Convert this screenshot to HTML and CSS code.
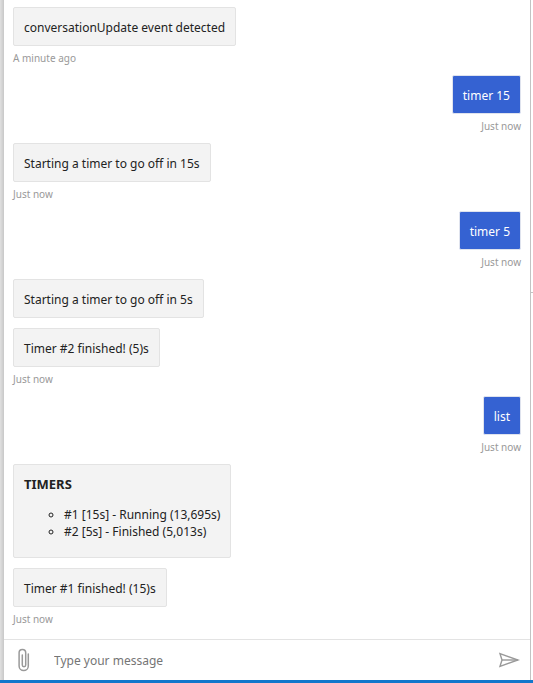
FILE: index.html
```html
<!DOCTYPE html>
<html lang="en">
<head>
<meta charset="utf-8">
<meta name="viewport" content="width=device-width, initial-scale=1">
<title>Chat</title>
<link rel="stylesheet" href="styles.css">
</head>
<body>
<div class="window">
  <div class="splitter"></div>
  <main class="chat">
    <div class="messages">
      <div class="group">
        <div class="bubble">conversationUpdate event detected</div>
        <div class="time">A minute ago</div>
      </div>
      <div class="group me">
        <div class="bubble">timer 15</div>
        <div class="time">Just now</div>
      </div>
      <div class="group">
        <div class="bubble">Starting a timer to go off in 15s</div>
        <div class="time">Just now</div>
      </div>
      <div class="group me">
        <div class="bubble">timer 5</div>
        <div class="time">Just now</div>
      </div>
      <div class="group">
        <div class="bubble">Starting a timer to go off in 5s</div>
        <div class="bubble">Timer #2 finished! (5)s</div>
        <div class="time">Just now</div>
      </div>
      <div class="group me">
        <div class="bubble">list</div>
        <div class="time">Just now</div>
      </div>
      <div class="group">
        <div class="bubble">
          <strong class="title">TIMERS</strong>
          <ul class="timers">
            <li>#1 [15s] - Running (13,695s)</li>
            <li>#2 [5s] - Finished (5,013s)</li>
          </ul>
        </div>
        <div class="bubble">Timer #1 finished! (15)s</div>
        <div class="time">Just now</div>
      </div>
    </div>
    <form class="composer">
      <button class="icon-button" type="button" aria-label="Attach a file">
        <svg width="12" height="24" viewBox="0 0 12 24" fill="none" stroke="#999" stroke-width="1.5" stroke-linecap="round">
          <path d="M10.300 6V18a4.600 4.600 0 0 1-9.200 0V4.800a3.300 3.300 0 0 1 6.600 0V17a1.700 1.700 0 0 1-3.400 0V7"/>
        </svg>
      </button>
      <input class="entry" type="text" placeholder="Type your message" aria-label="Type your message">
      <button class="icon-button" type="button" aria-label="Send">
        <svg width="22" height="16" viewBox="0 0 22 16" fill="none" stroke="#999" stroke-width="1.400" stroke-linejoin="miter">
          <path d="M2 1.700 20 8 2 14.300 4 8Z"/>
          <path d="M4 8H20"/>
        </svg>
      </button>
    </form>
  </main>
  <div class="edge"></div>
</div>
<footer class="status"></footer>
</body>
</html>
```
FILE: styles.css
```css
* {
  box-sizing: border-box;
}

body {
  margin: 0;
  min-height: 100vh;
  display: flex;
  flex-direction: column;
  background: #fff;
  color: #222;
  font-family: "Noto Sans", "Segoe UI", sans-serif;
  font-size: 12px;
  line-height: 17px;
}

.window {
  flex: 1;
  display: flex;
}

.splitter {
  width: 4px;
  background: linear-gradient(to right, #e0e0e0, #c8c8c8);
}

.chat {
  flex: 1;
  min-width: 0;
  display: flex;
  flex-direction: column;
}

.messages {
  flex: 1;
  display: flex;
  flex-direction: column;
  gap: 10px;
  padding: 7px 9px 3px;
}

.group {
  display: flex;
  flex-direction: column;
  align-items: flex-start;
}

.group.me {
  align-items: flex-end;
}

.bubble {
  padding: 11px 10px 9px;
  border: 1px solid #e3e3e3;
  border-radius: 2px;
  background: #f3f3f3;
}

.bubble + .bubble {
  margin-top: 10px;
}

.me .bubble {
  border-color: #dfe3ee;
  background: #3562d2;
  color: #fff;
}

.time {
  padding-top: 6px;
  color: #999;
  font-size: 10px;
  line-height: 13px;
}

.title {
  display: block;
  font-size: 13px;
}

.timers {
  margin: 13px 0 8px;
  padding-left: 40px;
  list-style: circle;
}

.composer {
  display: flex;
  align-items: center;
  height: 41px;
  border-top: 1px solid #e3e3e3;
  padding: 0 9px 0 0;
}

.icon-button {
  display: flex;
  justify-content: center;
  min-width: 40px;
  padding: 0;
  border: 0;
  background: none;
}

.icon-button:last-child {
  min-width: 24px;
}

.entry {
  flex: 1;
  min-width: 0;
  padding: 1px 10px 0;
  border: 0;
  outline: 0;
  background: none;
  font: inherit;
}

.entry::placeholder {
  color: #757575;
}

.edge {
  width: 3px;
  border-left: 1px solid #c3c3c3;
  background: linear-gradient(#c3c3c3, #c3c3c3) 0 43% / 100% 1px no-repeat;
}

.status {
  height: 3px;
  background: #1177cc;
}
```
